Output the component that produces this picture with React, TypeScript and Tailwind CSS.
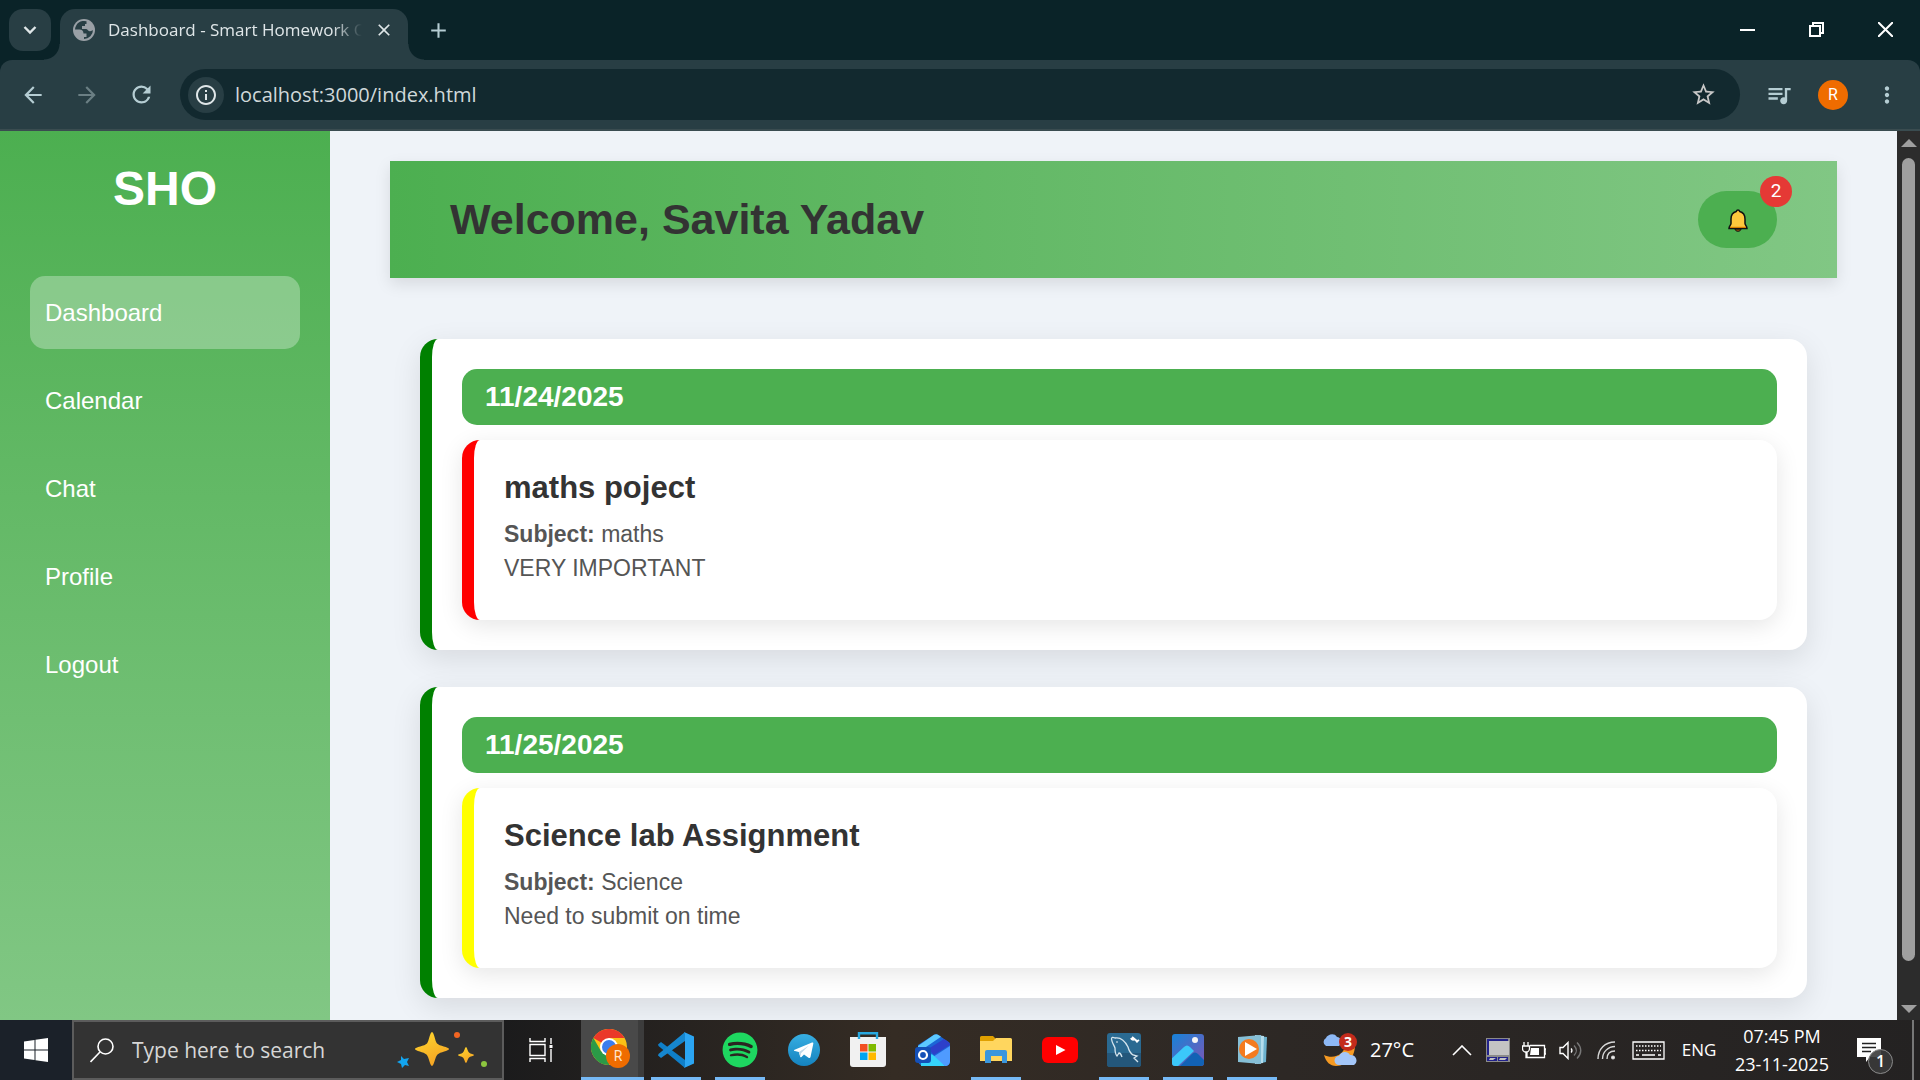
import type { ReactNode } from "react";
import { MdArrowBack, MdArrowForward, MdRefresh, MdInfoOutline, MdStarBorder, MdQueueMusic, MdMoreVert, MdAdd, MdClose } from "react-icons/md";
import { FaSpotify } from "react-icons/fa";

const navItems = ["Dashboard", "Calendar", "Chat", "Profile", "Logout"];

const homework = [
  { date: "11/24/2025", title: "maths poject", subject: "maths", note: "VERY IMPORTANT", border: "border-[#ff0000]" },
  { date: "11/25/2025", title: "Science lab Assignment", subject: "Science", note: "Need to submit on time", border: "border-[#ffff00]" },
];

function GlobeIcon() {
  return (
    <svg width="22" height="22" viewBox="0 0 22 22" aria-hidden="true" className="shrink-0">
      <circle cx="11" cy="11" r="11" fill="#9aa0a6" />
      <path d="M13.500 2.300A9 9 0 0 0 2 10.500h4.500c2.500 0 4 1.500 4 4h3v3.500h-2.500v2A9 9 0 0 0 20 11c-1 1-2.500 1.500-4 1-1.500-.5-1.500-2-3-2H9V7h3V5h1.500Z" fill="#283e44" />
    </svg>
  );
}

function TabStrip() {
  return (
    <div className="flex h-[60px] items-start bg-[#0a2328] text-[#dfe6e8]">
      <button aria-label="Search tabs" className="mt-[9px] ml-[9px] flex size-[42px] items-center justify-center rounded-[14px] bg-[#283e44]">
        <svg width="14" height="10" viewBox="0 0 14 10" fill="none" stroke="currentColor" strokeWidth="2.400">
          <path d="m1.500 2 5.500 5.500L12.500 2" />
        </svg>
      </button>
      <div className="relative mt-[9px] ml-[9px] flex h-[51px] w-[348px] items-center rounded-t-[15px] bg-[#283e44] pb-[9px] pl-[13px]">
        <span className="absolute bottom-0 -left-4 size-4 bg-[radial-gradient(circle_at_0_0,transparent_15px,#283e44_16px)]" />
        <span className="absolute -right-4 bottom-0 size-4 bg-[radial-gradient(circle_at_100%_0,transparent_15px,#283e44_16px)]" />
        <GlobeIcon />
        <span className="ml-[13px] w-[260px] shrink-0 mask-r-from-[225px] mask-r-to-[254px] text-[17px] leading-6 whitespace-nowrap">
          Dashboard - Smart Homework O
        </span>
        <button aria-label="Close tab" className="ml-[6px] shrink-0">
          <MdClose size={20} />
        </button>
      </div>
      <button aria-label="New tab" className="mt-[18px] ml-[18px] text-[#b5cdd3]">
        <MdAdd size={25} />
      </button>
      <div className="ml-auto flex h-[59px] text-white">
        <button aria-label="Minimize" className="flex w-[69px] items-center justify-center">
          <svg width="15" height="15" viewBox="0 0 15 15"><path d="M0 7h15v2H0z" fill="currentColor" /></svg>
        </button>
        <button aria-label="Restore" className="flex w-[69px] items-center justify-center">
          <svg width="15" height="15" viewBox="0 0 15 15" fill="none" stroke="currentColor" strokeWidth="2">
            <path d="M1 4h10v10H1zM4 4V1h10v10h-3" />
          </svg>
        </button>
        <button aria-label="Close" className="flex w-[69px] items-center justify-center">
          <svg width="15" height="15" viewBox="0 0 15 15" fill="none" stroke="currentColor" strokeWidth="2">
            <path d="m0 0 15 15M15 0 0 15" />
          </svg>
        </button>
      </div>
    </div>
  );
}

function Toolbar() {
  return (
    <div className="bg-[#0a2328]">
      <div className="flex h-[71px] items-center rounded-t-[12px] border-b-2 border-[#3a4c50] bg-[#283e44] text-[#b5cdd3]">
        <button aria-label="Back" className="flex w-[66px] justify-center"><MdArrowBack size={26} /></button>
        <button aria-label="Forward" className="flex w-[42px] justify-center text-[#6b7f84]"><MdArrowForward size={26} /></button>
        <button aria-label="Reload" className="flex w-[66px] justify-center"><MdRefresh size={27} /></button>
        <div className="ml-[6px] flex h-[51px] min-w-0 flex-1 items-center rounded-full bg-[#12292f] pr-[23px] pl-2">
          <button aria-label="View site information" className="flex size-9 shrink-0 items-center justify-center rounded-full bg-[#283e44] text-[#dfe6e8]">
            <MdInfoOutline size={24} />
          </button>
          <input
            aria-label="Address"
            defaultValue="localhost:3000/index.html"
            className="ml-[11px] min-w-0 flex-1 bg-transparent text-[20px] leading-7 text-[#d0d8da] outline-none"
          />
          <button aria-label="Bookmark this tab" className="text-[#c7c7c7]"><MdStarBorder size={27} /></button>
        </div>
        <button aria-label="Media controls" className="ml-[25px]"><MdQueueMusic size={28} /></button>
        <button aria-label="Profile" className="ml-[25px] flex size-[30px] items-center justify-center rounded-full bg-[#ef6c00] font-['Roboto',sans-serif] text-[16px] text-white">
          R
        </button>
        <button aria-label="Menu" className="mr-[20px] ml-[26px]"><MdMoreVert size={26} /></button>
      </div>
    </div>
  );
}

function Sidebar() {
  return (
    <aside className="w-[330px] shrink-0 bg-linear-to-b from-[#4caf50] to-[#81c784] px-[30px] pt-[30px] text-white">
      <h2 className="text-center text-[48px] leading-[55px] font-bold">SHO</h2>
      <nav className="mt-[60px] flex flex-col gap-[15px]">
        {navItems.map((item) => (
          <a
            key={item}
            href="#"
            className={`rounded-[15px] px-[15px] py-[22px] text-[24px] leading-[29px] ${item === "Dashboard" ? "bg-white/30" : ""}`}
          >
            {item}
          </a>
        ))}
      </nav>
    </aside>
  );
}

function WelcomeBar() {
  return (
    <header className="flex items-center justify-between bg-linear-to-r from-[#4caf50] to-[#81c784] px-[60px] py-[30px] shadow-[0_6px_15px_rgba(0,0,0,0.1)]">
      <h1 className="text-[43px] leading-[57px] font-bold text-[#333333]">Welcome, Savita Yadav</h1>
      <button aria-label="Notifications" className="relative flex h-[57px] w-[79px] items-center justify-center rounded-full bg-[#4caf50] pt-[2px]">
        <svg width="20" height="23" viewBox="0 0 20 23">
          <path d="M7 20c0 3 6 3 6 0Z" fill="#a4550f" stroke="#111" />
          <path d="M10 1c-1 0-1.500.7-1.700 1.500C4.500 3.500 3 6 3 10v4.500c0 1.500-2 2.500-2 5h18c0-2.500-2-3.500-2-5V10c0-4-1.500-6.500-5.300-7.500C11.500 1.700 11 1 10 1Z" fill="#ffc83d" stroke="#111" strokeWidth="1.500" />
          <path d="M2 17.800h16v1.200H2z" fill="#d67d00" />
        </svg>
        <span className="absolute -top-[15px] -right-[15px] flex h-[31px] w-8 items-center justify-center rounded-full bg-[#e53935] font-['Roboto',sans-serif] text-[19px] text-white">
          2
        </span>
      </button>
    </header>
  );
}

function HomeworkList() {
  return (
    <div className="flex flex-col gap-[37px] px-[30px] pt-[61px]">
      {homework.map((hw) => (
        <section
          key={hw.date}
          className="rounded-[18px] border-l-[12px] border-[#008000] bg-white p-[30px] shadow-[0_9px_30px_rgba(0,0,0,0.1)]"
        >
          <h2 className="rounded-[15px] bg-[#4caf50] px-[23px] py-3 text-[28px] leading-8 font-bold text-white">{hw.date}</h2>
          <article className={`mt-[15px] rounded-[18px] border-l-[12px] bg-white px-[30px] pt-[30px] pb-[35px] shadow-[0_6px_23px_rgba(0,0,0,0.1)] ${hw.border}`}>
            <h3 className="text-[31px] leading-9 font-bold text-[#333333]">{hw.title}</h3>
            <p className="mt-[11px] text-[23px] leading-[34px] text-[#555555]">
              <strong>Subject:</strong> {hw.subject}
            </p>
            <p className="text-[23px] leading-[34px] text-[#555555]">{hw.note}</p>
          </article>
        </section>
      ))}
    </div>
  );
}

function Scrollbar() {
  return (
    <div className="flex w-[23px] shrink-0 flex-col items-center bg-[#2c2c2c] pt-2 pb-[7px]">
      <svg width="16" height="8" viewBox="0 0 16 8"><path d="m8 0 8 8H0z" fill="#9f9f9f" /></svg>
      <div className="mt-[11px] mb-11 w-[13px] flex-1 rounded-full bg-[#9f9f9f]" />
      <svg width="16" height="8" viewBox="0 0 16 8"><path d="m8 8 8-8H0z" fill="#9f9f9f" /></svg>
    </div>
  );
}

function ChromeIcon() {
  return (
    <svg width="42" height="40" viewBox="0 0 42 40" className="ml-1">
      <circle cx="18" cy="18" r="18" fill="#fbc116" />
      <path d="M18 18 2.400 9A18 18 0 0 1 33.600 9H18Z" fill="#ea3829" />
      <path d="M2.400 9A18 18 0 0 0 18 36l7.800-13.500L18 18l-7.800 4.500Z" fill="#2b9a47" />
      <circle cx="18" cy="18" r="9" fill="#fff" />
      <circle cx="18" cy="18" r="7" fill="#3b7ded" />
      <circle cx="27" cy="27" r="12" fill="#ef6c00" />
      <text x="27" y="32" textAnchor="middle" fontSize="14" fill="#ffe3cc" fontFamily="Roboto, sans-serif">R</text>
    </svg>
  );
}

function VsCodeIcon() {
  return (
    <svg width="36" height="36" viewBox="0 0 36 36">
      <path d="M0 12.500 3 10l24 18v8L0.500 14Z" fill="#0f7fc9" />
      <path d="M0 23.500 3 26l24-17V0L0.500 22Z" fill="#1687cf" />
      <path d="M26 0 36 4.500v27L26 36c1-1 1-2 1-3V3c0-1 0-2-1-3Z" fill="#2ba5f3" />
    </svg>
  );
}

function TelegramIcon() {
  return (
    <svg width="32" height="32" viewBox="0 0 32 32">
      <defs>
        <linearGradient id="tg" x1="0" y1="0" x2="0" y2="1">
          <stop stopColor="#37aee2" />
          <stop offset="1" stopColor="#1583bf" />
        </linearGradient>
      </defs>
      <circle cx="16" cy="16" r="16" fill="url(#tg)" />
      <path d="M6 16 24 8.500c1-.3 1.500.2 1.300 1.200L22.500 23c-.3 1.200-1 1.300-2 .8L16 20.500 13.500 23c-.6.500-1 .5-1.300-.3L10.800 18 6 16.700Z" fill="#fff" />
      <path d="m11 18 10-6.500-8 7.800-.5 3.500Z" fill="#c3d9e8" />
    </svg>
  );
}

function StoreIcon() {
  return (
    <svg width="36" height="36" viewBox="0 0 36 36">
      <path d="M0 5h36v27a3 3 0 0 1-3 3H3a3 3 0 0 1-3-3Z" fill="#f1f1f1" />
      <path d="M9 7V1.200h18V7" fill="none" stroke="#29a9e0" strokeWidth="2.400" />
      <path d="M10 12h7.500v7.500H10z" fill="#f25022" />
      <path d="M18.500 12H26v7.500h-7.500z" fill="#7fba00" />
      <path d="M10 20.500h7.500V28H10z" fill="#00a4ef" />
      <path d="M18.500 20.500H26V28h-7.500z" fill="#ffb900" />
    </svg>
  );
}

function OutlookIcon() {
  return (
    <svg width="35" height="33" viewBox="0 0 35 33">
      <path d="M3 11 19 .8c1.300-.8 2.700-.8 4 0L33.500 8c1 .8 1.500 1.500 1.500 3v16c0 3-2 5-5 5H10c-4 0-7-2-7-6Z" fill="#1b66d6" />
      <path d="M3 12 19 .8c1.500-.8 3-.8 4 0l3 2L8 15H3Z" fill="#5cc9ff" />
      <path d="M13 15 29 5l4.500 3c1 .8 1.500 2 1.500 3L19 21Z" fill="#2d3fca" />
      <path d="m18 23 17-11v15c0 3-2 5-5 5Z" fill="#4f9bff" />
      <path d="M6 32h24L18 21c-1-1-2-1-3 0l-9 6Z" fill="#35d4fb" />
      <rect y="13" width="16" height="16" rx="3" fill="#1450b8" />
      <circle cx="8" cy="21" r="4" fill="none" stroke="#fff" strokeWidth="2.200" />
    </svg>
  );
}

function ExplorerIcon() {
  return (
    <svg width="32" height="28" viewBox="0 0 32 28">
      <path d="M0 1.500A1.500 1.500 0 0 1 1.500 0H13l3 3v6H0Z" fill="#e0a000" />
      <path d="M0 5h13l3-3h14.500A1.500 1.500 0 0 1 32 3.500V25H0Z" fill="#ffd65e" />
      <path d="M5 27V16a2 2 0 0 1 2-2h18a2 2 0 0 1 2 2v11h-5v-7H11v7Z" fill="#3a96dd" />
    </svg>
  );
}

function YouTubeIcon() {
  return (
    <svg width="36" height="26" viewBox="0 0 36 26">
      <rect width="36" height="26" rx="6" fill="#ff0000" />
      <path d="m14 8 9.500 5-9.500 5Z" fill="#fff" />
    </svg>
  );
}

function MySqlIcon() {
  return (
    <svg width="34" height="34" viewBox="0 0 34 34">
      <rect width="34" height="34" rx="3" fill="#2a6a92" />
      <path d="M0 20h34v11a3 3 0 0 1-3 3H3a3 3 0 0 1-3-3Z" fill="#24577b" />
      <path d="M15 24c-1-3-2-4-3-4l-2 3c-2-2-2-5-2-8-1-3-3-5-3.500-9 0-2 1.500-2 3.500-1 6-1 10 3 13 9 1 4 2 6 5 8l4 1-3 2 4 4" fill="none" stroke="#d5e5ee" strokeWidth="1.300" />
      <circle cx="10" cy="9" r="0.800" fill="#fff" />
      <path d="m25 4 6 5M24 5c1 2 2 2 4 1M29 9l3-2" stroke="#fff" strokeWidth="2" fill="none" />
    </svg>
  );
}

function PhotosIcon() {
  return (
    <svg width="32" height="32" viewBox="0 0 32 32">
      <defs>
        <linearGradient id="photoSky" x1="0" y1="0" x2="1" y2="1">
          <stop stopColor="#1683d8" />
          <stop offset="1" stopColor="#7d55b5" />
        </linearGradient>
        <clipPath id="photoClip"><rect width="32" height="32" rx="3" /></clipPath>
      </defs>
      <g clipPath="url(#photoClip)">
        <path d="M0 0h32v32H0z" fill="url(#photoSky)" />
        <path d="m8 32 12-12c2-2 4-2 6 0l8 8v6Z" fill="#1262b5" />
        <path d="m-2 26 14-13c2-2 4-2 6 0l4 4L6 32h-8Z" fill="#3bc8fa" />
        <circle cx="23" cy="6" r="3" fill="#f5f5f5" />
      </g>
    </svg>
  );
}

function MediaPlayerIcon() {
  return (
    <svg width="30" height="30" viewBox="0 0 30 30">
      <path d="m20 1 10 1-1 25-9 2Z" fill="#6db2cf" />
      <path d="m18 0 9 1-1 27-8 1Z" fill="#b4dcec" />
      <path d="m1 2 23-2v29L1 27Z" fill="#86bfd6" />
      <circle cx="12" cy="14" r="10" fill="#f47b20" />
      <path d="m8 7 12 7-12 7Z" fill="#fff" />
    </svg>
  );
}

const apps: { name: string; icon: ReactNode; open?: boolean }[] = [
  { name: "Visual Studio Code", icon: <VsCodeIcon />, open: true },
  { name: "Spotify", icon: <FaSpotify size={36} color="#1ed760" />, open: true },
  { name: "Telegram", icon: <TelegramIcon /> },
  { name: "Microsoft Store", icon: <StoreIcon /> },
  { name: "Outlook", icon: <OutlookIcon /> },
  { name: "File Explorer", icon: <ExplorerIcon />, open: true },
  { name: "YouTube", icon: <YouTubeIcon /> },
  { name: "MySQL Workbench", icon: <MySqlIcon />, open: true },
  { name: "Photos", icon: <PhotosIcon />, open: true },
  { name: "Media Player", icon: <MediaPlayerIcon />, open: true },
];

function SearchBox() {
  return (
    <label className="flex h-full w-[432px] items-center border-2 border-[#5c5c5c] bg-[#333333] pl-4">
      <svg width="24" height="25" viewBox="0 0 24 25" fill="none" stroke="#fff" strokeWidth="1.600">
        <circle cx="15.500" cy="8.500" r="7.500" />
        <path d="M10 14 0.500 24" />
      </svg>
      <input
        aria-label="Search"
        placeholder="Type here to search"
        className="ml-[18px] w-[250px] bg-transparent pt-[2px] text-[21px] outline-none placeholder:text-[#d6d6d6]"
      />
      <svg width="92" height="40" viewBox="0 0 92 40" className="mr-[14px] ml-auto">
        <defs>
          <linearGradient id="gold" x1="0" y1="0" x2="0.500" y2="1">
            <stop stopColor="#ffd92e" />
            <stop offset="1" stopColor="#f5a524" />
          </linearGradient>
        </defs>
        <path d="M36 2c2 0 3 9 5 11.500C43 16 53 17 53 19s-9 3-11.500 5.500C39 27 38 36 36 36s-3-9-5.500-11.500C28 22 19 21 19 19s10-3 12-5.500C33 11 34 2 36 2Z" fill="url(#gold)" />
        <path d="M70 17c1 0 1.500 4 3 5.500s5 1.500 5 2.500-4 1.500-5 2.500c-1.500 1.500-2 5.500-3 5.500s-1.500-4-3-5.500c-1-1-5-1.500-5-2.500s3.500-1 5-2.500S69 17 70 17Z" fill="url(#gold)" />
        <path d="m5 26 3 3 5-1-2 4 2 4-4-1-3 3-1-4-4-2 4-2Z" fill="#12a5f0" />
        <circle cx="61" cy="5" r="3" fill="#f26522" />
        <circle cx="88" cy="34" r="3" fill="#8dc63f" />
      </svg>
    </label>
  );
}

function Tray() {
  return (
    <div className="ml-auto flex h-full items-center">
      <button className="mr-[30px] flex items-center gap-3 text-[20px]">
        <svg width="37" height="36" viewBox="0 0 37 36">
          <path d="M33 8c4 14-6 26-18 26C9 34 5 30 3 23c8 4 22 2 22-15Z" fill="#f59a23" />
          <path d="M5 14a4.500 4.500 0 0 1 0-8c1-3 8-6 11-1 4 0 6 6 2 9Z" fill="#8db8f5" />
          <path d="M18 33a4.500 4.500 0 0 1 0-9c2-5 9-5 11-1 6-1 9 7 4 10Z" fill="#a3c6f8" />
          <circle cx="27" cy="10" r="9" fill="#c42b1c" />
          <text x="27" y="15" textAnchor="middle" fontSize="14" fontWeight="700" fill="#fff">3</text>
        </svg>
        27°C
      </button>
      <button aria-label="Show hidden icons" className="flex w-9 justify-center">
        <svg width="20" height="11" viewBox="0 0 20 11" fill="none" stroke="#fff" strokeWidth="1.600"><path d="m1 10 9-9 9 9" /></svg>
      </button>
      <button aria-label="Display" className="flex w-9 justify-center">
        <svg width="24" height="24" viewBox="0 0 24 24">
          <path d="M0 0h24v24H0z" fill="#8b8b8b" />
          <path d="M1 1h21v16H1zM1 19h10v4H1zM12 19h10v4H12z" fill="#22228a" />
          <path d="M3 3h20v14H3zM4 20h6l-3 2H3zM14 20h7l-2 2h-6z" fill="#c4c4c4" />
        </svg>
      </button>
      <button aria-label="Battery" className="flex w-9 justify-center">
        <svg width="24" height="17" viewBox="0 0 24 17" fill="none" stroke="#fff" strokeWidth="1.300">
          <path d="M8 3.500h14.500v12H5v-6M22.500 7H24v5h-1.500M2 0v4M6 0v4M0.500 4h7v2.500a3.500 3.500 0 0 1-7 0ZM4 10v5.500h2" />
          <path d="M9 6h8v7H8z" fill="#fff" stroke="none" />
        </svg>
      </button>
      <button aria-label="Volume" className="flex w-9 justify-center">
        <svg width="23" height="19" viewBox="0 0 23 19" fill="none" stroke="#fff" strokeWidth="1.400">
          <path d="M1 6.500h3l5-5v16l-5-5H1Z" />
          <path d="M12 7.500c1.200 1 1.200 3 0 4" />
          <path d="M15 4.500c3 3 3 7 0 10M18 1.500c5 5 5 11 0 16" stroke="#777" />
        </svg>
      </button>
      <button aria-label="Network" className="flex w-9 justify-center">
        <svg width="19" height="19" viewBox="0 0 19 19" fill="none" stroke="#d8d8d8" strokeWidth="1.400">
          <path d="M1 18C1 8 8 1 18 1M5.500 18C5.500 11 11 5.500 18 5.500M10 18c0-5 3-8 8-8" />
          <circle cx="16" cy="16.500" r="1.300" fill="#fff" />
        </svg>
      </button>
      <button aria-label="Touch keyboard" className="flex w-12 justify-center">
        <svg width="33" height="19" viewBox="0 0 33 19" fill="none" stroke="#fff" strokeWidth="1.300">
          <path d="M1 1h31v17H1z" />
          <path d="M4 5h25M4 9.500h25" strokeDasharray="1.500 1.500" />
          <path d="M4 14h3M10 14h13M26 14h3" />
        </svg>
      </button>
      <button className="w-[54px] text-[17px]">ENG</button>
      <button className="w-[112px] text-center text-[18px] leading-7">
        07:45 PM
        <br />
        23-11-2025
      </button>
      <button aria-label="Notifications, 1 new" className="flex w-[74px] justify-center pt-3">
        <svg width="38" height="38" viewBox="0 0 38 38">
          <path d="M1 1h24v19H14l-4 5v-5H1Z" fill="#fff" />
          <path d="M6 6.500h14M6 10.500h14M6 14.500h9" stroke="#222" strokeWidth="1.300" />
          <circle cx="24.500" cy="24.500" r="12" fill="#3a3a3a" fillOpacity="0.900" stroke="#8a8a8a" />
          <text x="24.500" y="30" textAnchor="middle" fontSize="16" fontWeight="600" fill="#fff">1</text>
        </svg>
      </button>
      <button aria-label="Show desktop" className="h-full w-2 border-l-2 border-[#777777]" />
    </div>
  );
}

function Taskbar() {
  return (
    <footer className="flex h-[60px] shrink-0 items-center bg-linear-to-r from-[#1b2129] via-[#352c24] via-55% to-[#242222] text-white">
      <button aria-label="Start" className="flex h-full w-[72px] items-center justify-center bg-[#1b2129]">
        <svg width="24" height="24" viewBox="0 0 24 24" fill="#fff">
          <path d="M0 3.500 10.500 2v9.500H0zM11.500 1.800 24 0v11.500H11.500zM0 12.500h10.500V22L0 20.500zM11.500 12.500H24V24l-12.500-1.800z" />
        </svg>
      </button>
      <SearchBox />
      <div className="flex h-full bg-linear-to-r from-[#1b1b1c] via-[#352c24] via-50% to-[#2d2825]">
        <button aria-label="Task view" className="flex h-full w-[77px] items-center justify-center pr-1">
          <svg width="24" height="24" viewBox="0 0 24 24" fill="none" stroke="#fff" strokeWidth="1.400">
            <path d="M1 6.500h15v11H1zM1 0v3.500h15V0M1 24v-3.500h15V24M22 0v6M22 11v13" />
            <path d="M20.500 7h3v3h-3z" fill="#fff" stroke="none" />
          </svg>
        </button>
        <button aria-label="Google Chrome" className="flex h-full w-[63px] flex-col bg-[#494949]">
          <span className="flex w-full flex-1 items-center border-r-[6px] border-[#3c3c3c] pl-[6px]"><ChromeIcon /></span>
          <span className="h-[3px] w-full bg-[#76b9f5]" />
        </button>
        {apps.map((app) => (
          <button key={app.name} aria-label={app.name} className="flex h-full w-16 flex-col items-center">
            <span className="flex flex-1 items-center pt-[3px]">{app.icon}</span>
            <span className={`h-[3px] w-[50px] ${app.open ? "bg-[#76b9f5]" : ""}`} />
          </button>
        ))}
      </div>
      <div className="flex h-full flex-1 bg-linear-to-r from-[#2d2825] to-[#242222]">
        <Tray />
      </div>
    </footer>
  );
}

export default function App() {
  return (
    <div className="flex h-screen flex-col overflow-hidden font-['Open_Sans','Noto_Sans',sans-serif]">
      <TabStrip />
      <Toolbar />
      <div className="flex min-h-0 flex-1 font-['Liberation_Sans',Arial,sans-serif]">
        <Sidebar />
        <main className="min-w-0 flex-1 overflow-hidden bg-[#eff3f8] px-[60px] pt-[30px]">
          <WelcomeBar />
          <HomeworkList />
        </main>
        <Scrollbar />
      </div>
      <Taskbar />
    </div>
  );
}
